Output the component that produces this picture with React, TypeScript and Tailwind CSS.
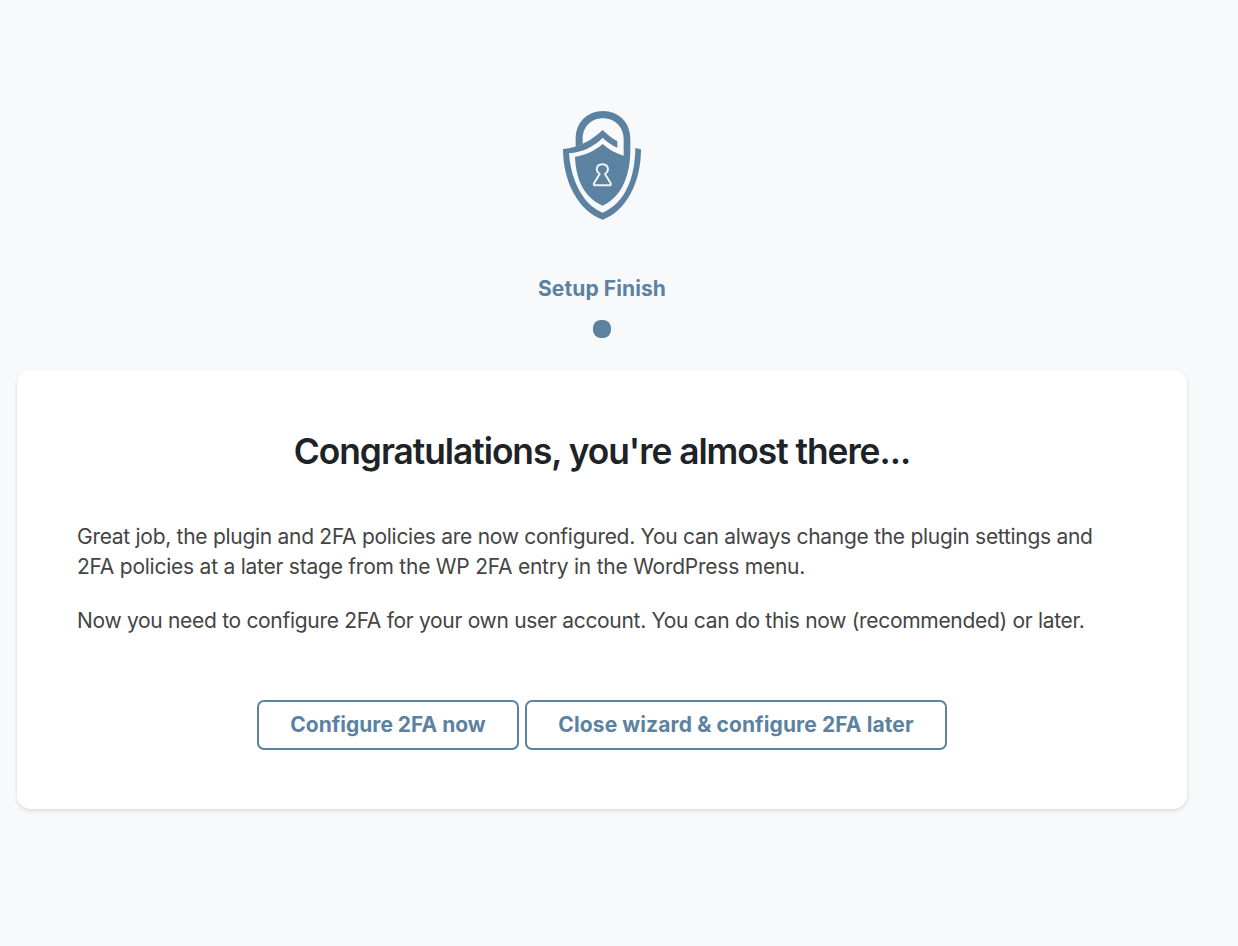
function ShieldLogo() {
  return (
    <svg className="h-[110px] w-[78px]" viewBox="39 30 234 330" fill="#5b82a1" aria-hidden="true">
      <path d="M77 141V117C77 67 112 33 159 33C206 33 241 67 241 117V151C241 216 221 289 158 317C95 289 77 226 75 170C108 165 135 152 158 132C177 150 199 161 221 167V117C221 80 193 55 159 55C124 55 98 80 98 117V132Z" />
      <path d="M39 147C90 143 127 119 158 90C172 104 186 115 202 124V143C185 135 170 125 158 113C130 142 96 156 57 160C61 227 93 313 158 338C225 309 255 235 256 144L273 148C273 245 230 333 158 359C85 333 39 245 39 147Z" />
      <path
        d="M149 222C133 209 141 193 157 193C173 193 181 209 165 222L182 250Q184 256 178 256H136Q130 256 132 250Z"
        fill="none"
        stroke="#eef3f7"
        strokeWidth="6"
        strokeLinejoin="round"
      />
    </svg>
  );
}

const buttonStyle =
  "h-[50px] rounded-[7px] border-2 border-[#5b82a1] bg-white text-[21px] font-bold text-[#5b82a1] whitespace-nowrap";

export default function App() {
  return (
    <div className="min-h-[946px] bg-[#f8f9fb] pt-[110px] pr-[51px] pl-[17px] font-['Inter','Liberation_Sans',sans-serif]">
      <header className="flex flex-col items-center">
        <ShieldLogo />
        <p className="mt-[54px] text-[21px] leading-[30px] font-bold tracking-[0.1px] text-[#5b82a1]">Setup Finish</p>
        <span className="mt-4 size-[18px] rounded-[8px] bg-[#5b82a1]" />
      </header>
      <main className="mt-8 h-[439px] rounded-[14px] bg-white px-[60px] pt-[60px] shadow-[0_2px_4px_rgba(0,0,0,0.12)]">
        <h1 className="text-center text-[35.3px] leading-[44px] font-semibold tracking-[-1.03px] text-[#1d2327]">
          Congratulations, you're almost there...
        </h1>
        <p className="mt-[48px] text-[21px] leading-[30px] tracking-[-0.285px] whitespace-nowrap text-[#444]">
          Great job, the plugin and 2FA policies are now configured. You can always change the plugin settings and
          <br />
          <span className="tracking-[-0.235px]">
            2FA policies at a later stage from the WP 2FA entry in the WordPress menu.
          </span>
        </p>
        <p className="mt-6 text-[21px] leading-[30px] tracking-[-0.305px] whitespace-nowrap text-[#444]">
          Now you need to configure 2FA for your own user account. You can do this now (recommended) or later.
        </p>
        <div className="mt-[64px] flex justify-center gap-1.5">
          <button className={`${buttonStyle} w-[262px]`}>Configure 2FA now</button>
          <button className={`${buttonStyle} w-[422px] tracking-[0.11px]`}>Close wizard &amp; configure 2FA later</button>
        </div>
      </main>
    </div>
  );
}
